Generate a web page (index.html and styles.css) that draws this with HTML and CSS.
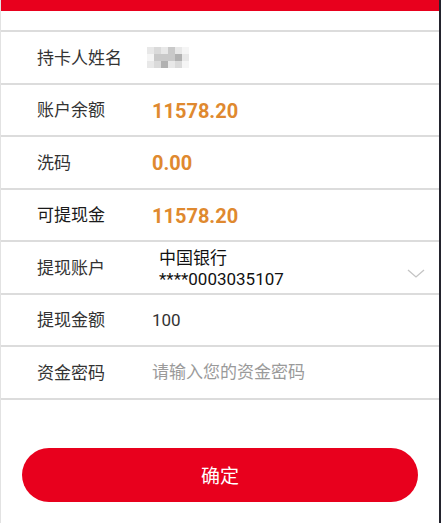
FILE: index.html
```html
<!DOCTYPE html>
<html lang="zh-CN">
<head>
    <meta charset="UTF-8">
    <meta name="viewport" content="width=device-width, initial-scale=1.0">
    <title>提现</title>
    <link rel="stylesheet" href="styles.css">
</head>
<body>
    <div class="page">
        <div class="top-bar"></div>
        <div class="form">
            <div class="row">
                <span class="label">持卡人姓名</span>
                <div class="mosaic">
                    <i class="m1"></i><i class="m2"></i><i class="m1"></i><i class="m3"></i><i class="m1"></i><i class="m0"></i>
                    <i class="m0"></i><i class="m3"></i><i class="m3"></i><i class="m3"></i><i class="m4"></i><i class="m1"></i>
                    <i class="m1"></i><i class="m2"></i><i class="m4"></i><i class="m1"></i><i class="m2"></i><i class="m0"></i>
                </div>
            </div>
            <div class="row">
                <span class="label">账户余额</span>
                <span class="amount">11578.20</span>
            </div>
            <div class="row">
                <span class="label">洗码</span>
                <span class="amount">0.00</span>
            </div>
            <div class="row">
                <span class="label label-strong">可提现金</span>
                <span class="amount">11578.20</span>
            </div>
            <div class="row">
                <span class="label">提现账户</span>
                <div class="bank">
                    <div class="bank-name">中国银行</div>
                    <div class="bank-card">****0003035107</div>
                </div>
                <svg class="chevron" width="18" height="9" viewBox="0 0 18 9">
                    <path d="M1 1 L9 8 L17 1" fill="none" stroke="#c4c4c4" stroke-width="1.3"/>
                </svg>
            </div>
            <div class="row">
                <span class="label">提现金额</span>
                <input class="field" type="text" value="100">
            </div>
            <div class="row">
                <span class="label">资金密码</span>
                <input class="field" type="password" placeholder="请输入您的资金密码">
            </div>
        </div>
        <div class="actions">
            <button class="submit">确定</button>
        </div>
    </div>
</body>
</html>
```

FILE: styles.css
```css
body {
    margin: 0;
    padding: 0;
    background: #fff;
    font-family: "Noto Sans CJK SC", sans-serif;
    color: #333;
}
.page {
    height: 523px;
    box-sizing: border-box;
    border-left: 1px solid #e2e2e2;
    border-right: 2px solid #23232d;
    overflow: hidden;
}
.top-bar {
    height: 11px;
    background: #e8001d;
}
.form {
    padding-top: 19px;
}
.row {
    display: flex;
    align-items: center;
    height: 50.5px;
    padding: 0 22px 0 36px;
    border-bottom: 2px solid #dcdcdc;
}
.row:first-child {
    border-top: 2px solid #dcdcdc;
}
.label {
    width: 115px;
    flex-shrink: 0;
    font-size: 17px;
    color: #333;
    margin-top: -2px;
}
.label-strong {
    color: #1a1a1a;
}
.amount {
    font-family: Roboto, sans-serif;
    font-weight: bold;
    font-size: 20px;
    color: #df892f;
    margin-top: 2px;
}
.mosaic {
    display: grid;
    grid-template-columns: repeat(6, 7px);
    grid-auto-rows: 7px;
    margin-left: -5px;
    opacity: 0.9;
}
.mosaic i { display: block; }
.mosaic .m0 { background: #f4f4f4; }
.mosaic .m1 { background: #e6e6e6; }
.mosaic .m2 { background: #d6d6d6; }
.mosaic .m3 { background: #c4c4c4; }
.mosaic .m4 { background: #a9a9a9; }
.bank {
    flex: 1;
    margin-left: 7px;
    color: #111;
    font-size: 17px;
    line-height: 22px;
    margin-top: 2px;
}
.bank-card {
    font-family: Roboto, sans-serif;
}
.chevron {
    margin-top: 12px;
    margin-right: -8px;
}
.field {
    flex: 1;
    border: none;
    outline: none;
    padding: 0;
    font-family: Roboto, "Noto Sans CJK SC", sans-serif;
    font-size: 17px;
    color: #333;
    background: transparent;
}
.field::placeholder {
    font-family: "Noto Sans CJK SC", sans-serif;
    font-size: 17px;
    color: #9a9a9a;
}
.actions {
    padding: 48px 21px 0 21px;
}
.submit {
    display: block;
    width: 100%;
    height: 54px;
    border: none;
    border-radius: 27px;
    background: #e8001d;
    color: #fff;
    font-family: "Noto Sans CJK SC", sans-serif;
    font-size: 19px;
    cursor: pointer;
}
```
